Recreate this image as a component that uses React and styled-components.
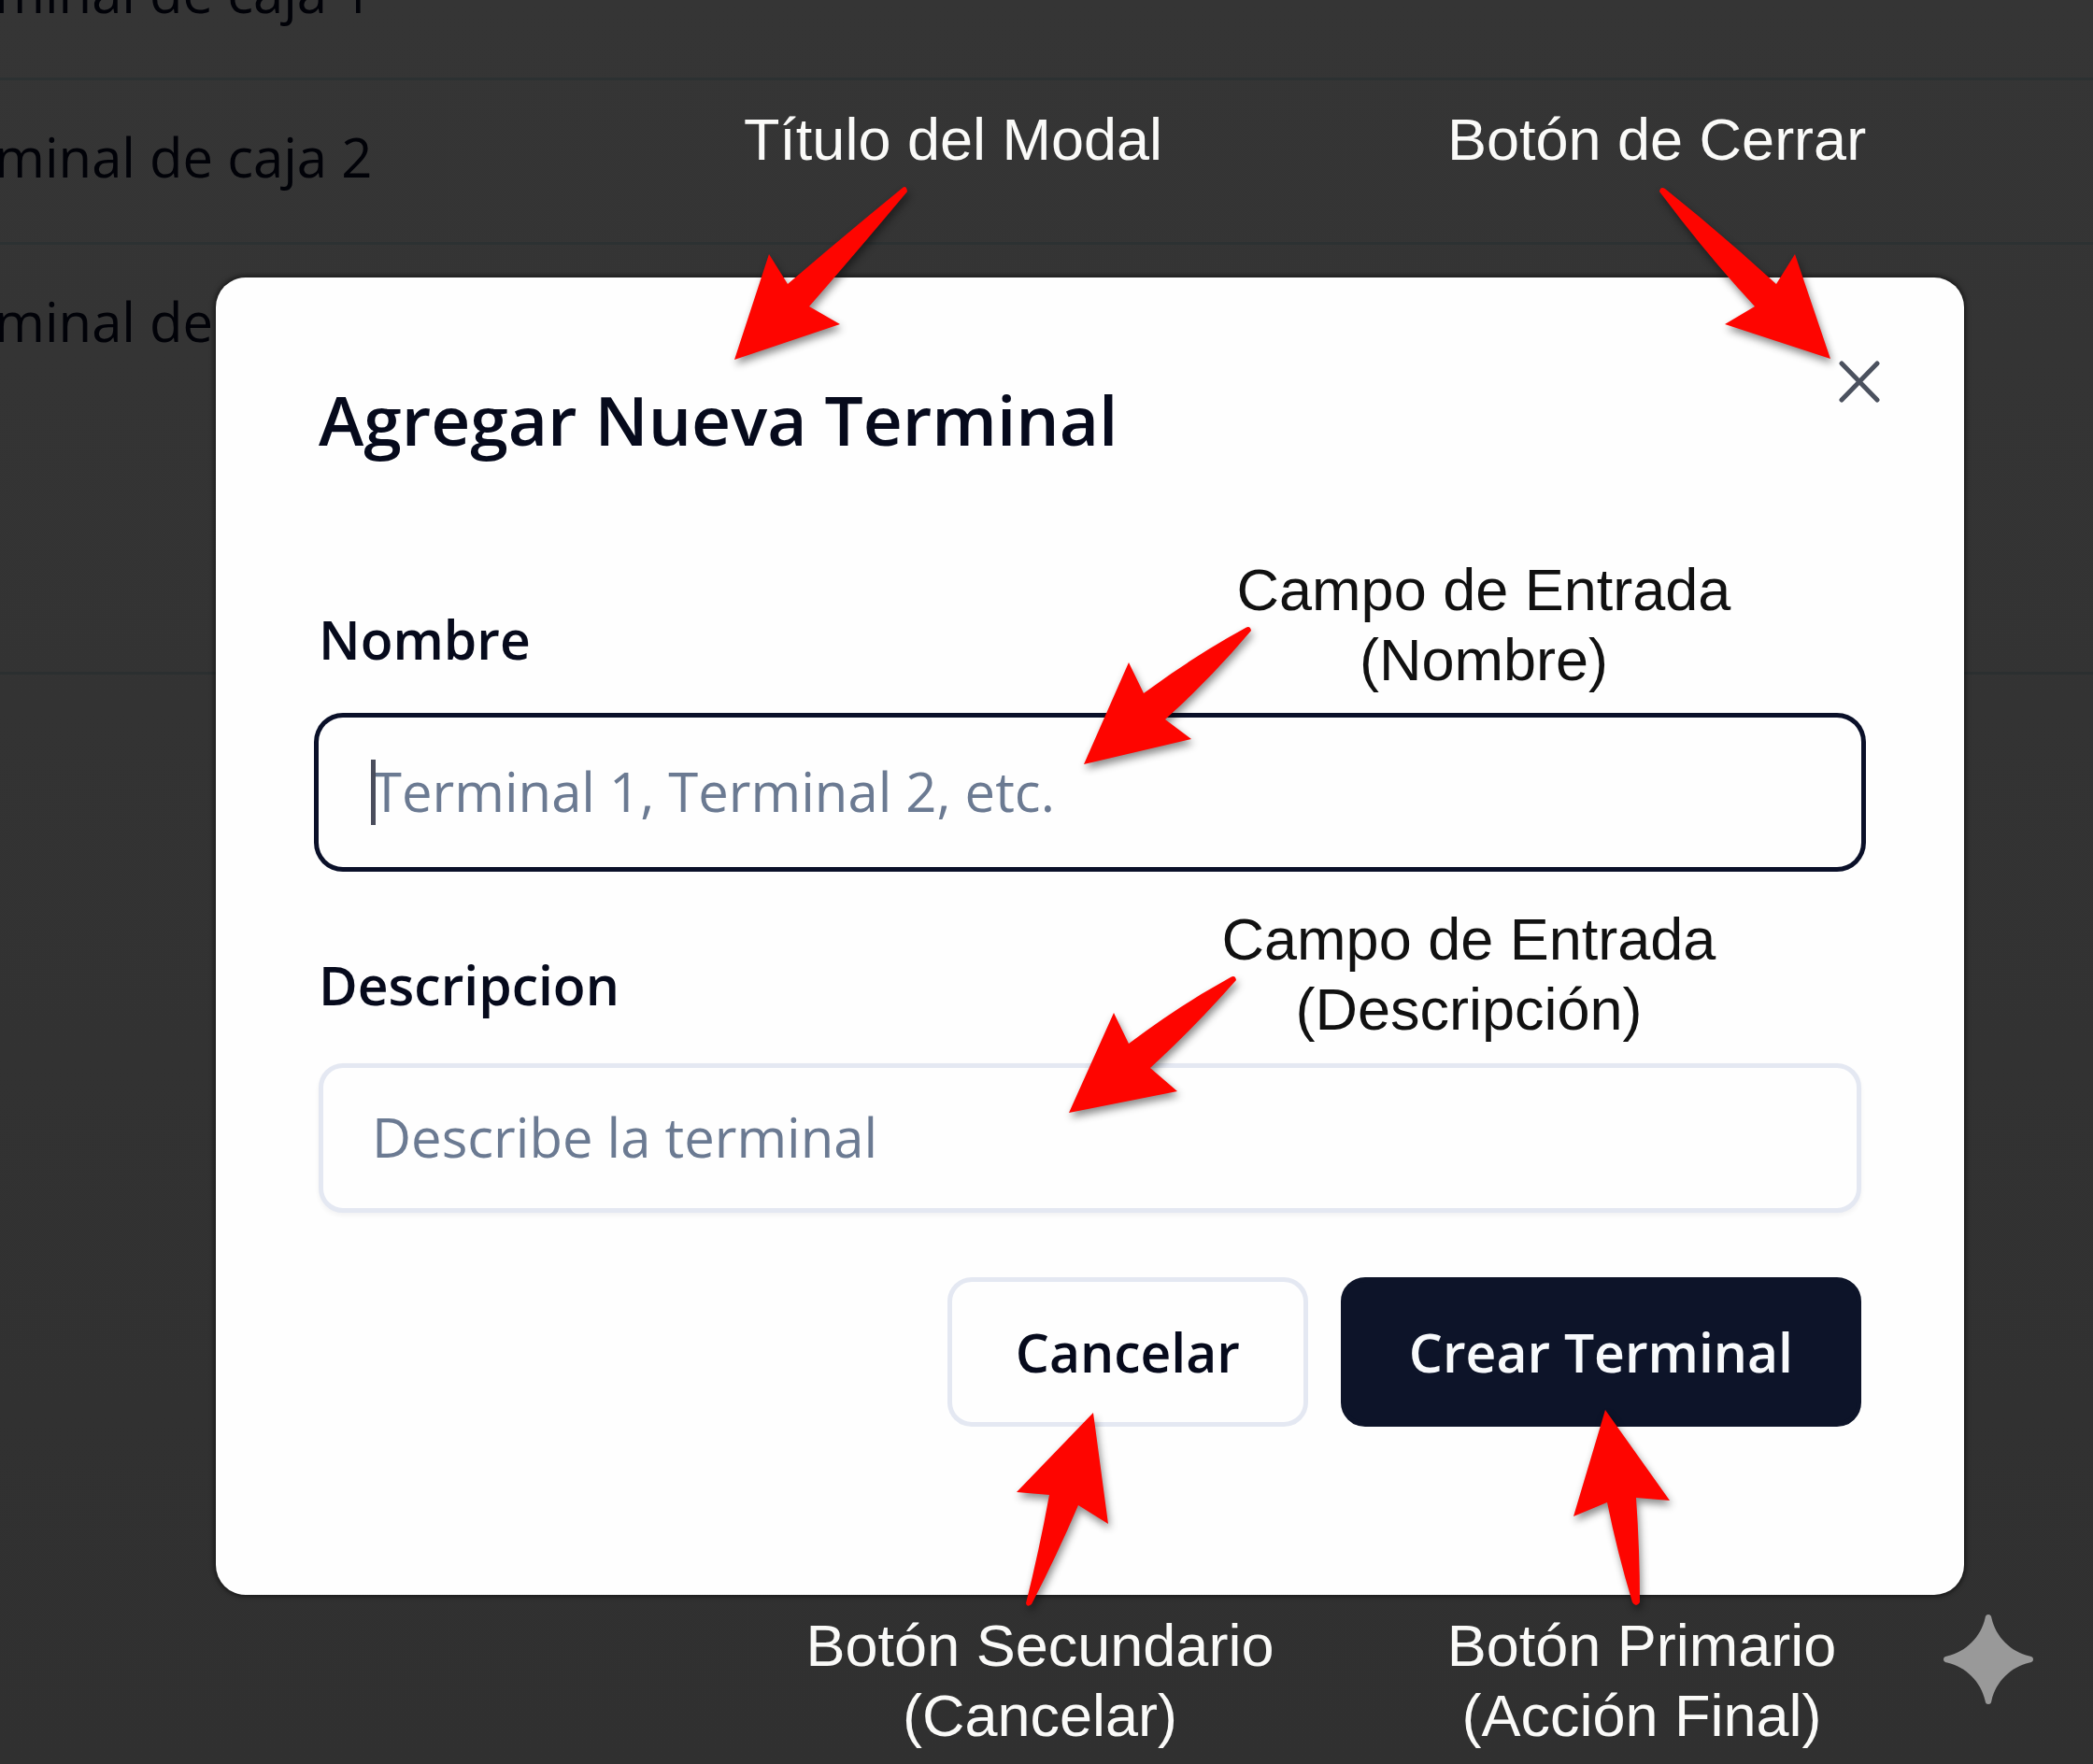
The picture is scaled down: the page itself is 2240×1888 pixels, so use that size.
import React from "react";
import styled, { createGlobalStyle } from "styled-components";

const GlobalStyle = createGlobalStyle`
  *, *::before, *::after { box-sizing: border-box; }
  body { margin: 0; background: #333334; }
`;

const uiFont = `"Open Sans", "Noto Sans", sans-serif`;
const noteFont = `"Liberation Sans", Arial, sans-serif`;

const Page = styled.div`
  position: relative;
  display: grid;
  grid-template-columns: minmax(0, 1fr);
  min-height: 100vh;
  overflow: hidden;
  background: linear-gradient(#353535, #303030);
  font-family: ${uiFont};
`;

const Backdrop = styled.div`
  grid-area: 1 / 1;
  align-self: start;
  margin: -90px 0 0 -94px;
  height: 812px;
  border-bottom: 3px solid #2b2f30;
`;

const TerminalList = styled.ul`
  margin: 0;
  padding: 0;
  list-style: none;
`;

const TerminalRow = styled.li`
  display: flex;
  align-items: center;
  height: 176px;
  padding-bottom: 9px;
  border-bottom: 3px solid #2c3132;
  color: #010208;
  font-size: 58px;
  font-weight: 500;
  line-height: 64px;
  &:last-child { border-bottom-color: transparent; }
`;

const Stage = styled.main`
  grid-area: 1 / 1;
  padding: 297px 138px 181px 231px;
`;

const Dialog = styled.section`
  padding: 80px 80px 180px;
  border-radius: 32px;
  background: #fefefe;
  box-shadow: 0 0 5px 2px rgba(0, 0, 0, 0.5);
  color: #060a1c;
`;

const DialogHeader = styled.header`
  display: flex;
  align-items: flex-start;
  justify-content: space-between;
`;

const DialogTitle = styled.h1`
  margin: 0;
  padding: 30px 0 0 30px;
  font-size: 73px;
  font-weight: 600;
  line-height: 84px;
`;

const CloseButton = styled.button`
  display: grid;
  place-items: center;
  width: 64px;
  height: 64px;
  padding: 0;
  border: 0;
  background: none;
  color: #4b515e;
  cursor: pointer;
`;

const Form = styled.form`
  display: flex;
  flex-direction: column;
  gap: 94px;
  padding: 161px 30px 0;
`;

const Field = styled.div`
  display: flex;
  flex-direction: column;
  gap: 52px;
`;

const FieldLabel = styled.label`
  font-size: 57px;
  font-weight: 600;
  line-height: 64px;
`;

const InputWrap = styled.div`
  position: relative;
  display: flex;
`;

const TextInput = styled.input`
  flex: 1;
  min-width: 0;
  height: 160px;
  padding: 0 52px 4px;
  border: 5px solid ${(p) => (p.$active ? "transparent" : "#e4e8f2")};
  border-radius: 26px;
  outline: none;
  background: #fefefe;
  box-shadow: ${(p) => (p.$active ? "0 0 0 5px #0a1029" : "0 3px 5px rgba(15, 23, 42, 0.05)")};
  color: #060a1c;
  font-family: inherit;
  font-size: 58px;
  &::placeholder { color: #6b7a92; opacity: 1; }
`;

const Caret = styled.span`
  position: absolute;
  top: 45px;
  left: 56px;
  width: 5px;
  height: 70px;
  background: #4a4d5c;
`;

const Actions = styled.div`
  display: flex;
  justify-content: flex-end;
  gap: 35px;
  margin-top: -25px;
`;

const ActionButton = styled.button`
  height: 160px;
  padding: 0 68px;
  border: 5px solid ${(p) => (p.$primary ? "#0d1429" : "#e4e8f2")};
  border-radius: 26px;
  background: ${(p) => (p.$primary ? "#0d1429" : "#fefefe")};
  color: ${(p) => (p.$primary ? "#f8fafc" : "#060a1c")};
  font-family: inherit;
  font-size: 57px;
  font-weight: 600;
  line-height: 64px;
  white-space: nowrap;
  cursor: pointer;
`;

const Note = styled.p`
  position: absolute;
  top: ${(p) => p.$y}px;
  left: ${(p) => p.$x}px;
  margin: 0;
  transform: translateX(-50%);
  color: ${(p) => (p.$dark ? "#111111" : "#fafaf8")};
  font-family: ${noteFont};
  font-size: 63px;
  line-height: 75px;
  text-align: center;
  white-space: nowrap;
  pointer-events: none;
`;

const Arrows = styled.svg`
  position: absolute;
  top: 0;
  left: 0;
  overflow: visible;
  pointer-events: none;
  filter: drop-shadow(2px 5px 4px rgba(0, 0, 0, 0.45));
`;

const Sparkle = styled.svg`
  position: absolute;
  top: 1728px;
  left: 2080px;
`;

const terminals = ["Terminal de caja 1", "Terminal de caja 2", "Terminal de caja 3"];

const notes = [
  { x: 1020, y: 112, lines: ["Título del Modal"] },
  { x: 1773, y: 112, lines: ["Botón de Cerrar"] },
  { x: 1588, y: 594, dark: true, lines: ["Campo de Entrada", "(Nombre)"] },
  { x: 1572, y: 968, dark: true, lines: ["Campo de Entrada", "(Descripción)"] },
  { x: 1113, y: 1724, lines: ["Botón Secundario", "(Cancelar)"] },
  { x: 1757, y: 1724, lines: ["Botón Primario", "(Acción Final)"] },
];

const arrows = [
  "M966 201 Q970 198 971 205 Q915 272 866 328 L899 347 L786 385 L823 272 L843 304 Q906 250 966 201Z",
  "M1776 205 Q1777 199 1782 202 Q1842 250 1901 304 L1921 272 L1959 384 L1846 347 L1878 328 Q1826 272 1776 205Z",
  "M1333 672 Q1338 669 1339 675 Q1294 728 1247 770 L1275 791 L1160 818 L1208 709 L1224 742 Q1278 702 1333 672Z",
  "M1317 1046 Q1322 1043 1323 1049 Q1276 1102 1231 1143 L1260 1168 L1144 1191 L1192 1084 L1208 1117 Q1262 1076 1317 1046Z",
  "M1098 1716 Q1099 1721 1104 1717 Q1131 1665 1154 1611 L1186 1631 L1170 1512 L1088 1597 L1123 1600 Q1112 1660 1098 1716Z",
  "M1747 1715 Q1751 1721 1755 1715 Q1755 1660 1751 1603 L1787 1606 L1718 1509 L1684 1623 L1720 1608 Q1731 1662 1747 1715Z",
];

export default function App() {
  return (
    <Page>
      <GlobalStyle />
      <Backdrop>
        <TerminalList>
          {terminals.map((name) => (
            <TerminalRow key={name}>{name}</TerminalRow>
          ))}
        </TerminalList>
      </Backdrop>

      <Stage>
        <Dialog role="dialog" aria-labelledby="dialog-title">
          <DialogHeader>
            <DialogTitle id="dialog-title">Agregar Nueva Terminal</DialogTitle>
            <CloseButton type="button" aria-label="Cerrar">
              <svg width="46" height="46" viewBox="0 0 46 46" fill="none" stroke="currentColor" strokeWidth="5" strokeLinecap="round">
                <path d="M4 3L42 42M42 3L4 42" />
              </svg>
            </CloseButton>
          </DialogHeader>
          <Form onSubmit={(e) => e.preventDefault()}>
            <Field>
              <FieldLabel htmlFor="nombre">Nombre</FieldLabel>
              <InputWrap>
                <TextInput id="nombre" $active placeholder="Terminal 1, Terminal 2, etc." />
                <Caret aria-hidden="true" />
              </InputWrap>
            </Field>
            <Field>
              <FieldLabel htmlFor="descripcion">Descripcion</FieldLabel>
              <InputWrap>
                <TextInput id="descripcion" placeholder="Describe la terminal" />
              </InputWrap>
            </Field>
            <Actions>
              <ActionButton type="button">Cancelar</ActionButton>
              <ActionButton type="submit" $primary>Crear Terminal</ActionButton>
            </Actions>
          </Form>
        </Dialog>
      </Stage>

      <Arrows width="100%" height="100%" fill="#fe0500" aria-hidden="true">
        {arrows.map((d) => (
          <path key={d} d={d} />
        ))}
      </Arrows>

      {notes.map((note) => (
        <Note key={note.lines.join(" ")} $x={note.x} $y={note.y} $dark={note.dark}>
          {note.lines.map((line, i) => (
            <React.Fragment key={line}>
              {i > 0 && <br />}
              {line}
            </React.Fragment>
          ))}
        </Note>
      ))}

      <Sparkle width="96" height="96" viewBox="0 0 96 96" fill="#999999" aria-hidden="true">
        <path d="M48 0C50 0 51 1 51.500 4C56 24 72 40 92 44.500C95 45 96 46 96 48C96 50 95 51 92 51.500C72 56 56 72 51.500 92C51 95 50 96 48 96C46 96 45 95 44.500 92C40 72 24 56 4 51.500C1 51 0 50 0 48C0 46 1 45 4 44.500C24 40 40 24 44.500 4C45 1 46 0 48 0Z" />
      </Sparkle>
    </Page>
  );
}
